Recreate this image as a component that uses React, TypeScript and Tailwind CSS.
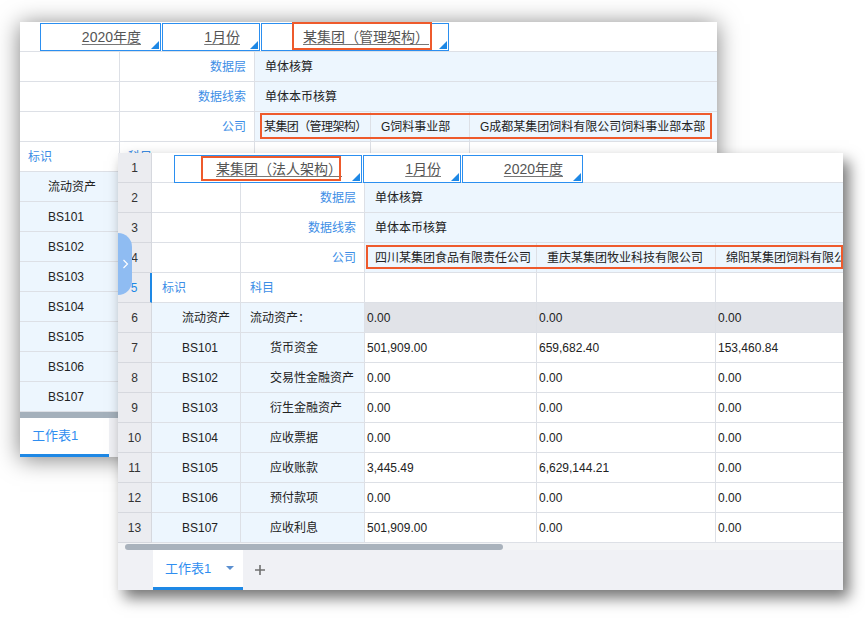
import React from "react";

const LB = "bg-[#edf6fe]";

function Tri() {
  return (
    <svg className="absolute right-[1px] bottom-[1px]" width="8" height="8" viewBox="0 0 8 8">
      <polygon points="8,0 8,8 0,8" fill="#1e88e5" />
    </svg>
  );
}

function Drop({ w, text }: { w: string; text: string }) {
  return (
    <div className={`relative h-[28px] border border-[#2b8ff0] flex items-center justify-end pr-[19px] shrink-0 ${w}`}>
      <span className="text-[14px] text-[#555] underline decoration-[#777] underline-offset-[2px] whitespace-nowrap">{text}</span>
      <Tri />
    </div>
  );
}

function Red({ cls }: { cls: string }) {
  return <div className={`absolute border-2 border-[#ee5a2c] pointer-events-none ${cls}`} />;
}

/* ---------------- back window ---------------- */

function BRow({ children, h = "h-[30px]" }: { children: React.ReactNode; h?: string }) {
  return <div className={`flex ${h} border-b border-[#dde0e6] shrink-0`}>{children}</div>;
}

const bCell = "h-full border-r border-[#dde0e6] flex items-center shrink-0 whitespace-nowrap overflow-hidden";

function BackWindow() {
  const items = ["流动资产", "BS101", "BS102", "BS103", "BS104", "BS105", "BS106", "BS107"];
  return (
    <div className="absolute left-[20px] top-[22px] w-[697px] h-[435px] bg-white shadow-[0_2px_22px_rgba(0,0,0,0.5)] flex flex-col overflow-hidden">
      <BRow>
        <div className="flex items-start pt-[1px] pl-[20px] gap-[1px] h-full">
          <Drop w="w-[121px]" text="2020年度" />
          <Drop w="w-[98px]" text="1月份" />
          <Drop w="w-[188px]" text="某集团（管理架构）" />
        </div>
      </BRow>
      <BRow>
        <div className={`${bCell} w-[100px]`} />
        <div className={`${bCell} w-[135px] justify-end pr-[8px] text-[#3d8ee6]`}>数据层</div>
        <div className={`h-full flex-1 flex items-center pl-[10px] ${LB}`}>单体核算</div>
      </BRow>
      <BRow>
        <div className={`${bCell} w-[100px]`} />
        <div className={`${bCell} w-[135px] justify-end pr-[8px] text-[#3d8ee6]`}>数据线索</div>
        <div className={`h-full flex-1 flex items-center pl-[10px] ${LB}`}>单体本币核算</div>
      </BRow>
      <BRow>
        <div className={`${bCell} w-[100px]`} />
        <div className={`${bCell} w-[135px] justify-end pr-[8px] text-[#3d8ee6]`}>公司</div>
        <div className={`${bCell} w-[116px] pl-[9px] tracking-[-0.6px] ${LB}`}>某集团（管理架构）</div>
        <div className={`${bCell} w-[99px] pl-[10px] ${LB}`}>G饲料事业部</div>
        <div className={`h-full flex-1 flex items-center pl-[10px] whitespace-nowrap ${LB}`}>G成都某集团饲料有限公司饲料事业部本部</div>
      </BRow>
      <BRow>
        <div className={`${bCell} w-[100px] pl-[8px] text-[#3d8ee6]`}>标识</div>
        <div className={`${bCell} w-[135px] pl-[8px] text-[#3d8ee6]`}>科目</div>
        <div className={`${bCell} w-[116px]`} />
        <div className={`${bCell} w-[99px]`} />
        <div className="h-full flex-1" />
      </BRow>
      {items.map((t) => (
        <BRow key={t}>
          <div className={`${bCell} w-[100px] pl-[28px] ${LB}`}>{t}</div>
          <div className={`${bCell} w-[135px] ${LB}`} />
          <div className="h-full flex-1" />
        </BRow>
      ))}
      <div className="h-[6px] bg-[#a4b0bb] shrink-0" />
      <div className="flex-1 bg-[#f0f1f5] flex">
        <div className="w-[89px] h-full bg-white border-b-[3px] border-[#1e88e5] flex items-center pl-[12px] text-[13px] text-[#2f8ef0]">
          工作表1
        </div>
      </div>
      <Red cls="left-[272px] top-0 w-[140px] h-[28px]" />
      <Red cls="left-[240px] top-[91px] w-[452px] h-[26px]" />
    </div>
  );
}

/* ---------------- front window ---------------- */

const fCell = "h-full border-r border-[#dde0e6] flex items-center shrink-0 whitespace-nowrap overflow-hidden";

function FRow({ n, active, children }: { n: number; active?: boolean; children: React.ReactNode }) {
  return (
    <div className="flex h-[30px] shrink-0">
      <div
        className={`w-[34px] shrink-0 bg-[#ebecf0] border-b border-[#d6d8de] flex items-center justify-center ${
          active ? "text-[#1e88e5] border-r-2 border-r-[#1e88e5]" : "text-[#333] border-r border-r-[#d6d8de]"
        }`}
      >
        {n}
      </div>
      <div className="flex flex-1 border-b border-[#dde0e6] min-w-0">{children}</div>
    </div>
  );
}

const rows: [string, string, string, string, string][] = [
  ["BS101", "货币资金", "501,909.00", "659,682.40", "153,460.84"],
  ["BS102", "交易性金融资产", "0.00", "0.00", "0.00"],
  ["BS103", "衍生金融资产", "0.00", "0.00", "0.00"],
  ["BS104", "应收票据", "0.00", "0.00", "0.00"],
  ["BS105", "应收账款", "3,445.49", "6,629,144.21", "0.00"],
  ["BS106", "预付款项", "0.00", "0.00", "0.00"],
  ["BS107", "应收利息", "501,909.00", "0.00", "0.00"],
];

function FrontWindow() {
  return (
    <div className="absolute left-[118px] top-[153px] w-[725px] h-[437px] bg-white shadow-[6px_8px_14px_rgba(0,0,0,0.55)] flex flex-col overflow-hidden">
      <FRow n={1}>
        <div className="flex items-start pt-[2px] pl-[22px] gap-[1px] h-full">
          <Drop w="w-[188px]" text="某集团（法人架构）" />
          <Drop w="w-[98px]" text="1月份" />
          <Drop w="w-[121px]" text="2020年度" />
        </div>
      </FRow>
      <FRow n={2}>
        <div className={`${fCell} w-[89px]`} />
        <div className={`${fCell} w-[124px] justify-end pr-[8px] text-[#3d8ee6]`}>数据层</div>
        <div className={`h-full flex-1 flex items-center pl-[10px] ${LB}`}>单体核算</div>
      </FRow>
      <FRow n={3}>
        <div className={`${fCell} w-[89px]`} />
        <div className={`${fCell} w-[124px] justify-end pr-[8px] text-[#3d8ee6]`}>数据线索</div>
        <div className={`h-full flex-1 flex items-center pl-[10px] ${LB}`}>单体本币核算</div>
      </FRow>
      <FRow n={4}>
        <div className={`${fCell} w-[89px]`} />
        <div className={`${fCell} w-[124px] justify-end pr-[8px] text-[#3d8ee6]`}>公司</div>
        <div className={`${fCell} w-[172px] pl-[10px] ${LB}`}>四川某集团食品有限责任公司</div>
        <div className={`${fCell} w-[179px] pl-[10px] ${LB}`}>重庆某集团牧业科技有限公司</div>
        <div className={`h-full flex-1 flex items-center pl-[10px] whitespace-nowrap overflow-hidden ${LB}`}>绵阳某集团饲料有限公司</div>
      </FRow>
      <FRow n={5} active>
        <div className={`${fCell} w-[89px] pl-[10px] text-[#3d8ee6]`}>标识</div>
        <div className={`${fCell} w-[124px] pl-[9px] text-[#3d8ee6]`}>科目</div>
        <div className={`${fCell} w-[172px]`} />
        <div className={`${fCell} w-[179px]`} />
        <div className="h-full flex-1" />
      </FRow>
      <FRow n={6}>
        <div className={`${fCell} w-[89px] pl-[30px] ${LB}`}>流动资产</div>
        <div className={`${fCell} w-[124px] pl-[9px] ${LB}`}>流动资产：</div>
        <div className={`${fCell} w-[172px] pl-[2px] bg-[#e1e3e8]`}>0.00</div>
        <div className={`${fCell} w-[179px] pl-[2px] bg-[#e1e3e8]`}>0.00</div>
        <div className="h-full flex-1 flex items-center pl-[2px] bg-[#e1e3e8]">0.00</div>
      </FRow>
      {rows.map((r, i) => (
        <FRow key={r[0]} n={7 + i}>
          <div className={`${fCell} w-[89px] pl-[30px] ${LB}`}>{r[0]}</div>
          <div className={`${fCell} w-[124px] pl-[29px] ${LB}`}>{r[1]}</div>
          <div className={`${fCell} w-[172px] pl-[2px]`}>{r[2]}</div>
          <div className={`${fCell} w-[179px] pl-[2px]`}>{r[3]}</div>
          <div className="h-full flex-1 flex items-center pl-[2px]">{r[4]}</div>
        </FRow>
      ))}
      <div className="h-[7px] shrink-0 bg-[#f3f4f6] flex items-center pl-[7px]">
        <div className="w-[378px] h-[6px] rounded-full bg-[#a9b2bc]" />
      </div>
      <div className="flex-1 bg-[#f0f1f5] flex items-stretch">
        <div className="w-[35px] shrink-0" />
        <div className="w-[90px] bg-white border-b-[3px] border-[#1e88e5] flex items-center pl-[12px] pr-[9px] justify-between">
          <span className="text-[13px] text-[#2f8ef0]">工作表1</span>
          <svg width="8" height="5" viewBox="0 0 8 5">
            <polygon points="0,0 8,0 4,4" fill="#5b8fd0" />
          </svg>
        </div>
        <div className="flex items-center pl-[11px] text-[#666]">
          <svg width="12" height="12" viewBox="0 0 12 12">
            <path d="M6 1v10M1 6h10" stroke="#707070" strokeWidth="1.6" />
          </svg>
        </div>
      </div>
      <div className="absolute left-0 top-[80px] w-[14px] h-[62px] bg-[#8fbcf2] rounded-r-[14px] flex items-center justify-center">
        <svg width="7" height="10" viewBox="0 0 7 10">
          <path d="M1.5 1l4 4-4 4" stroke="white" strokeWidth="1.2" fill="none" />
        </svg>
      </div>
      <Red cls="left-[83px] top-[3px] w-[140px] h-[25px]" />
      <Red cls="left-[248px] top-[92px] w-[477px] h-[24px]" />
    </div>
  );
}

export default function App() {
  return (
    <div className="relative w-[865px] h-[618px] bg-white overflow-hidden text-[12px] text-[#222] font-['Liberation_Sans','Noto_Sans_CJK_SC',sans-serif]">
      <BackWindow />
      <FrontWindow />
    </div>
  );
}
